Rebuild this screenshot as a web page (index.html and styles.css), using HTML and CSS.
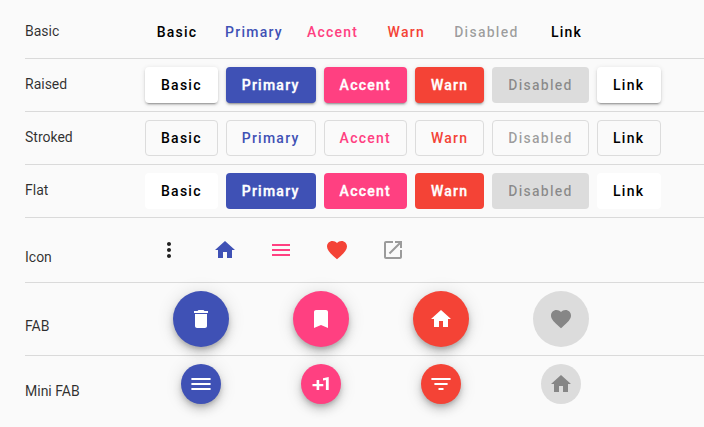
FILE: index.html
```html
<!DOCTYPE html>
<html lang="en">
<head>
<meta charset="utf-8">
<title>Buttons</title>
<link rel="stylesheet" href="styles.css">
</head>
<body>
<svg class="sprite" aria-hidden="true">
  <symbol id="more" viewBox="0 0 24 24"><path d="M12 8c1.1 0 2-.9 2-2s-.9-2-2-2-2 .9-2 2 .9 2 2 2zm0 2c-1.100 0-2 .9-2 2s.9 2 2 2 2-.9 2-2-.9-2-2-2zm0 6c-1.100 0-2 .9-2 2s.9 2 2 2 2-.9 2-2-.9-2-2-2z"/></symbol>
  <symbol id="home" viewBox="0 0 24 24"><path d="M10 20v-6h4v6h5v-8h3L12 3 2 12h3v8z"/></symbol>
  <symbol id="menu" viewBox="0 0 24 24"><path d="M3 18h18v-2H3v2zm0-5h18v-2H3v2zm0-7v2h18V6H3z"/></symbol>
  <symbol id="menu-bold" viewBox="0 0 24 24"><path d="M2.400 18h19.200v-2H2.400v2zm0-5h19.200v-2H2.400v2zm0-7v2h19.200V6H2.400z"/></symbol>
  <symbol id="heart" viewBox="0 0 24 24"><path d="M12 21.350l-1.450-1.320C5.400 15.360 2 12.280 2 8.500 2 5.420 4.420 3 7.500 3c1.740 0 3.410.81 4.500 2.090C13.090 3.810 14.760 3 16.500 3 19.580 3 22 5.420 22 8.500c0 3.780-3.400 6.860-8.550 11.540L12 21.350z"/></symbol>
  <symbol id="open" viewBox="0 0 24 24"><path d="M19 19H5V5h7V3H5c-1.110 0-2 .9-2 2v14c0 1.100.89 2 2 2h14c1.100 0 2-.9 2-2v-7h-2v7zM14 3v2h3.590l-9.830 9.830 1.410 1.410L19 6.410V10h2V3h-7z"/></symbol>
  <symbol id="delete" viewBox="0 0 24 24"><path d="M6 19c0 1.100.9 2 2 2h8c1.100 0 2-.9 2-2V7H6v12zM19 4h-3.500l-1-1h-5l-1 1H5v2h14V4z"/></symbol>
  <symbol id="bookmark" viewBox="0 0 24 24"><path d="M17 3H7c-1.100 0-1.990.9-1.990 2L5 21l7-3 7 3V5c0-1.100-.9-2-2-2z"/></symbol>
  <symbol id="plus" viewBox="0 0 24 24"><path d="M10.200 8H7.600v4H3.500v2.300h4.100V18h2.600v-3.700h4.100V12h-4.100zM14 6.300v2.200l2.900-.5V18h2.800V5z"/></symbol>
  <symbol id="filter" viewBox="0 0 24 24"><path d="M9.500 18h5v-2h-5v2zM2.400 6v2h19.200V6H2.400zm3 7h13.200v-2H5.400v2z"/></symbol>
</svg>
<main class="overview">
  <section class="row">
    <div class="label">Basic</div>
    <div class="buttons">
      <button class="btn">Basic</button>
      <button class="btn primary">Primary</button>
      <button class="btn accent">Accent</button>
      <button class="btn warn">Warn</button>
      <button class="btn" disabled>Disabled</button>
      <a class="btn link">Link</a>
    </div>
  </section>
  <section class="row">
    <div class="label">Raised</div>
    <div class="buttons">
      <button class="btn filled raised">Basic</button>
      <button class="btn filled raised primary">Primary</button>
      <button class="btn filled raised accent">Accent</button>
      <button class="btn filled raised warn">Warn</button>
      <button class="btn filled raised" disabled>Disabled</button>
      <a class="btn filled raised link">Link</a>
    </div>
  </section>
  <section class="row">
    <div class="label">Stroked</div>
    <div class="buttons">
      <button class="btn stroked">Basic</button>
      <button class="btn stroked primary">Primary</button>
      <button class="btn stroked accent">Accent</button>
      <button class="btn stroked warn">Warn</button>
      <button class="btn stroked" disabled>Disabled</button>
      <a class="btn stroked link">Link</a>
    </div>
  </section>
  <section class="row">
    <div class="label">Flat</div>
    <div class="buttons">
      <button class="btn filled">Basic</button>
      <button class="btn filled primary">Primary</button>
      <button class="btn filled accent">Accent</button>
      <button class="btn filled warn">Warn</button>
      <button class="btn filled" disabled>Disabled</button>
      <a class="btn filled link">Link</a>
    </div>
  </section>
  <section class="row icons">
    <div class="label">Icon</div>
    <div class="buttons">
      <button class="icon-btn"><svg><use href="#more"/></svg></button>
      <button class="icon-btn primary"><svg><use href="#home"/></svg></button>
      <button class="icon-btn accent"><svg><use href="#menu"/></svg></button>
      <button class="icon-btn warn"><svg><use href="#heart"/></svg></button>
      <button class="icon-btn" disabled><svg><use href="#open"/></svg></button>
    </div>
  </section>
  <section class="row fabs">
    <div class="label">FAB</div>
    <div class="cells">
      <button class="fab primary"><svg><use href="#delete"/></svg></button>
      <button class="fab accent"><svg><use href="#bookmark"/></svg></button>
      <button class="fab warn"><svg><use href="#home"/></svg></button>
      <button class="fab" disabled><svg><use href="#heart"/></svg></button>
    </div>
  </section>
  <section class="row fabs">
    <div class="label">Mini FAB</div>
    <div class="cells">
      <button class="fab mini primary"><svg><use href="#menu-bold"/></svg></button>
      <button class="fab mini accent"><svg><use href="#plus"/></svg></button>
      <button class="fab mini warn"><svg><use href="#filter"/></svg></button>
      <button class="fab mini" disabled><svg><use href="#home"/></svg></button>
    </div>
  </section>
</main>
</body>
</html>
```
FILE: styles.css
```css
* { box-sizing: border-box; }

body {
  margin: 0;
  min-height: 100vh;
  background: #fafafa;
  color: rgba(0, 0, 0, 0.82);
  font: 400 14px/20px Roboto, sans-serif;
}

.sprite { display: none; }

.overview { min-height: 100vh; padding: 6px 0 0 25px; }

.row {
  display: flex;
  align-items: center;
  padding: 8px 0;
  border-bottom: 1px solid #dadada;
}
.row:last-child { border-bottom: 0; }

.label {
  flex: none;
  width: 120px;
  padding-bottom: 2px;
}
.icons .label, .fabs .label { padding: 14px 0 0; }
.fabs .label { width: 116px; }

.buttons { display: flex; gap: 8px; }

.cells {
  display: grid;
  grid-template-columns: repeat(4, 120px);
  justify-items: center;
}

button {
  border: 0;
  background: transparent;
  font: inherit;
  color: inherit;
}

.primary { --theme: #3f51b5; }
.accent { --theme: #ff4081; }
.warn { --theme: #f44336; }

.btn {
  display: inline-flex;
  align-items: center;
  justify-content: center;
  min-width: 64px;
  height: 36px;
  padding: 0 8px;
  border-radius: 4px;
  color: var(--theme, #000);
  font-weight: 500;
  letter-spacing: 1.25px;
}
.btn:disabled { color: rgba(0, 0, 0, 0.38); }

.filled { padding: 0 16px; background: var(--theme, #fff); }
.filled.primary, .filled.accent, .filled.warn {
  color: #fff;
  -webkit-text-stroke: 0.35px #fff;
}
.filled:disabled { background: #dcdcdc; }

.raised {
  box-shadow: 0 3px 1px -2px rgba(0, 0, 0, 0.2), 0 2px 2px 0 rgba(0, 0, 0, 0.14), 0 1px 5px 0 rgba(0, 0, 0, 0.12);
}
.raised:disabled { box-shadow: none; }

.stroked { padding: 0 15px; border: 1px solid #dcdcdc; }

svg { width: 24px; height: 24px; fill: currentColor; }

.icon-btn, .fab {
  display: flex;
  align-items: center;
  justify-content: center;
  padding: 0;
}

.icon-btn { width: 48px; height: 48px; color: var(--theme, rgba(0, 0, 0, 0.87)); }
.icon-btn:disabled { color: rgba(0, 0, 0, 0.38); }

.fab {
  width: 56px;
  height: 56px;
  border-radius: 50%;
  background: var(--theme);
  color: #fff;
  box-shadow: 0 3px 5px -1px rgba(0, 0, 0, 0.2), 0 6px 10px 0 rgba(0, 0, 0, 0.14), 0 1px 18px 0 rgba(0, 0, 0, 0.12);
}
.fab.mini { width: 40px; height: 40px; }
.fab:disabled { background: #dcdcdc; color: #868686; box-shadow: none; }
```
